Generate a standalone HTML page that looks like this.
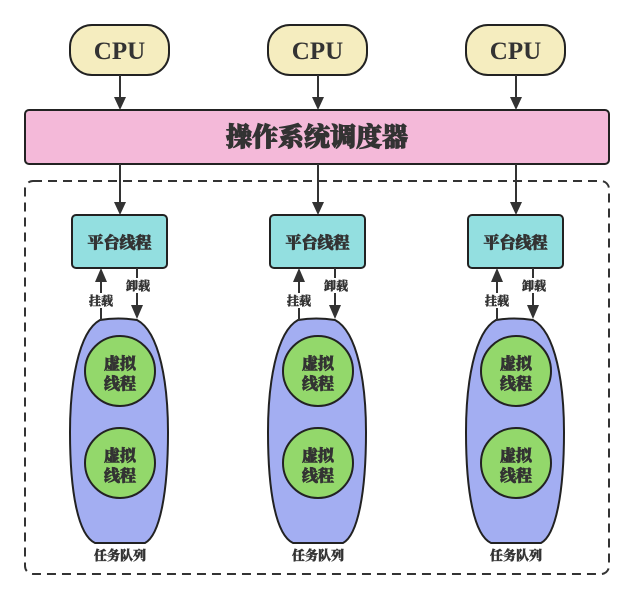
<!DOCTYPE html>
<html><head><meta charset="utf-8"><style>
html,body{margin:0;padding:0;background:#fff;width:635px;height:600px;overflow:hidden}
text{font-family:"Liberation Serif","Noto Serif CJK SC",serif;font-weight:900;fill:#333}
.c{stroke:#333;stroke-width:0.7}
</style></head><body>
<svg width="635" height="600" viewBox="0 0 635 600" xmlns="http://www.w3.org/2000/svg">
<defs>
<g id="col">
<rect x="70" y="25" width="99" height="50" rx="22" fill="#f5edbf" stroke="#222" stroke-width="2"/>
<text x="119.5" y="59" font-size="25" text-anchor="middle" font-family="Liberation Serif">CPU</text>
<line x1="120" y1="75" x2="120" y2="99" stroke="#333" stroke-width="2"/>
<path d="M114,97 L126,97 L120,110 Z" fill="#333"/>
<line x1="120" y1="164" x2="120" y2="203" stroke="#333" stroke-width="2"/>
<path d="M114,202 L126,202 L120,215 Z" fill="#333"/>
<rect x="72" y="215" width="95" height="53" rx="4" fill="#93dfe0" stroke="#222" stroke-width="2"/>
<text class="c" x="119.5" y="248" font-size="16" text-anchor="middle">平台线程</text>
<path d="M100,320 Q118,317 137,320 C160,332 168,385 168,432 C168,492 160,535 145,543 L95,543 C78,535 70,492 70,432 C70,385 78,332 100,320 Z" fill="#a3aef2" stroke="#222" stroke-width="2"/>
<line x1="101" y1="280" x2="101" y2="320" stroke="#333" stroke-width="2"/>
<path d="M95,282 L107,282 L101,268 Z" fill="#333"/>
<line x1="137" y1="268" x2="137" y2="306" stroke="#333" stroke-width="2"/>
<path d="M131,305 L143,305 L137,319 Z" fill="#333"/>
<rect x="124" y="278" width="28" height="15" fill="#fff"/>
<text class="c" x="138" y="290" font-size="12" text-anchor="middle" style="stroke-width:0.4">卸载</text>
<rect x="87" y="293" width="28" height="15" fill="#fff"/>
<text class="c" x="101" y="305" font-size="12" text-anchor="middle" style="stroke-width:0.4">挂载</text>
<circle cx="120" cy="371" r="35" fill="#93d86b" stroke="#222" stroke-width="2"/>
<text class="c" x="120" y="369" font-size="16" text-anchor="middle">虚拟</text>
<text class="c" x="120" y="389" font-size="16" text-anchor="middle">线程</text>
<circle cx="120" cy="463" r="35" fill="#93d86b" stroke="#222" stroke-width="2"/>
<text class="c" x="120" y="461" font-size="16" text-anchor="middle">虚拟</text>
<text class="c" x="120" y="481" font-size="16" text-anchor="middle">线程</text>
<text class="c" x="120" y="560" font-size="13" text-anchor="middle" style="stroke-width:0.4">任务队列</text>
</g>
</defs>
<rect x="25" y="181" width="584" height="393" rx="8" fill="none" stroke="#333" stroke-width="2" stroke-dasharray="9,6"/>
<rect x="25" y="110" width="584" height="54" rx="4" fill="#f4b9d9" stroke="#222" stroke-width="2"/>
<text class="c" x="317" y="146" font-size="26" text-anchor="middle" style="stroke-width:1">操作系统调度器</text>
<use href="#col"/>
<use href="#col" x="198"/>
<use href="#col" x="396"/>
</svg>
</body></html>
